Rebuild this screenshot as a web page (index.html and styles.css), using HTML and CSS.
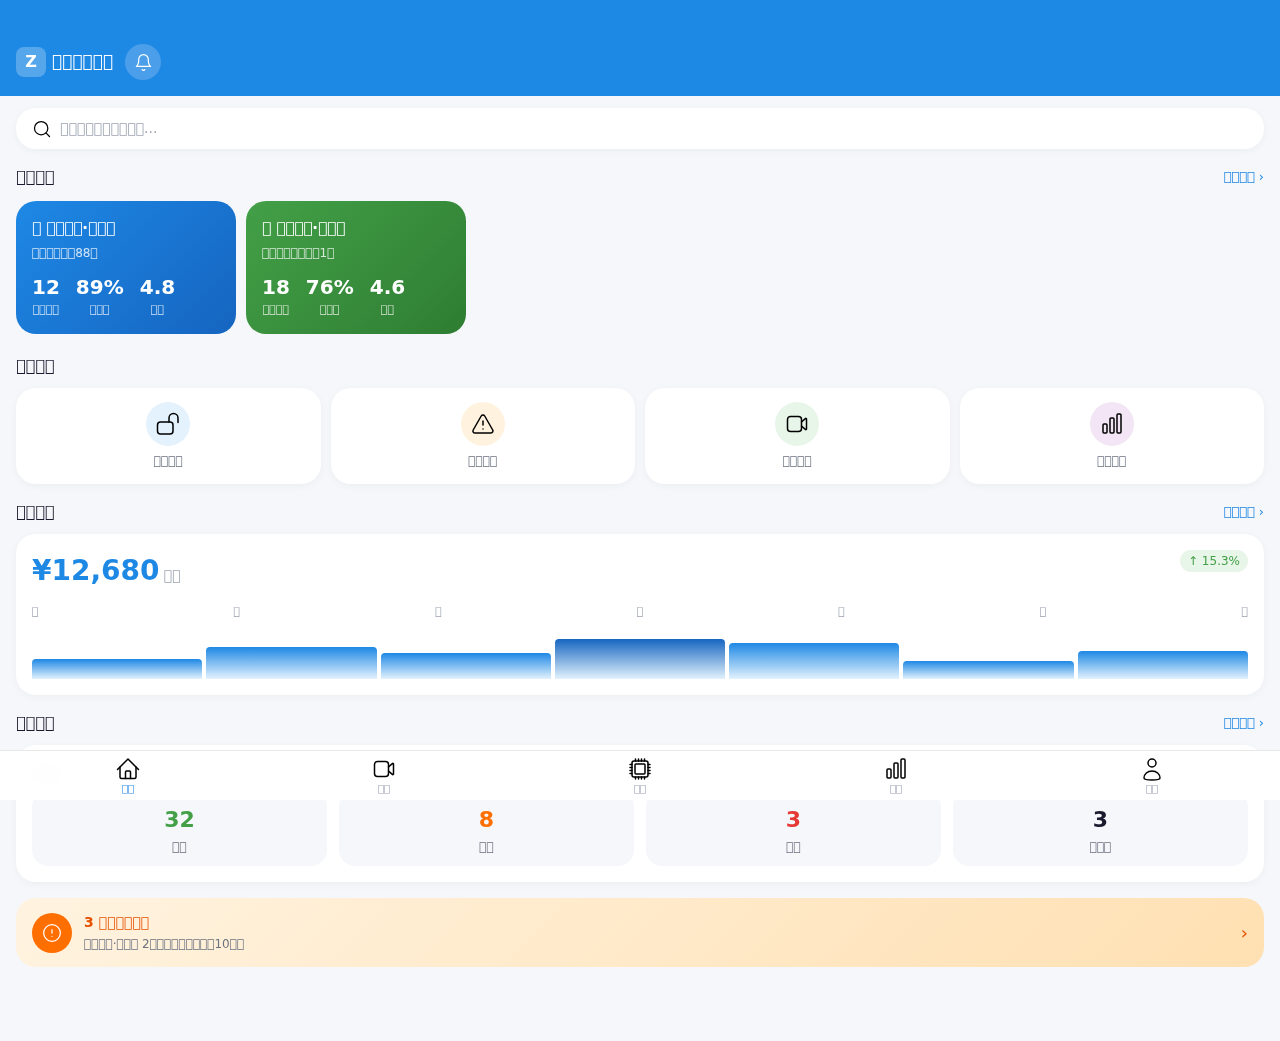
FILE: index.html
```html
<!DOCTYPE html>
<html>
<head>
    <meta charset="utf-8">
    <title>Dashboard</title>
    <link rel="stylesheet" href="styles.css">
</head>
<body>
    <div class="header">
        <div class="logo">Z</div>
        <span class="app-title">&#xE000;&#xE000;&#xE000;&#xE000;&#xE000;&#xE000;</span>
        <div class="bell">
            <svg class="icon-bell" viewBox="0 0 24 24"><path d="M6 8a6 6 0 0 1 12 0c0 7 3 9 3 9H3s3-2 3-9"/><path d="M10.3 21a1.94 1.94 0 0 0 3.4 0"/></svg>
        </div>
    </div>

    <div class="content">
        <div class="search">
            <svg class="icon-search" viewBox="0 0 24 24"><circle cx="11" cy="11" r="8"/><path d="m21 21-4.3-4.3"/></svg>
            <span>&#xE000;&#xE000;&#xE000;&#xE000;&#xE000;&#xE000;&#xE000;&#xE000;&#xE000;&#xE000;...</span>
        </div>

        <div class="section-head">
            <h2>&#xE000;&#xE000;&#xE000;&#xE000;</h2>
            <a class="more">&#xE000;&#xE000;&#xE000;&#xE000; ›</a>
        </div>
        <div class="stores">
            <div class="store store-blue">
                <div class="store-name">&#xE000; &#xE000;&#xE000;&#xE000;&#xE000;·&#xE000;&#xE000;&#xE000;</div>
                <div class="store-sub">&#xE000;&#xE000;&#xE000;&#xE000;&#xE000;&#xE000;88&#xE000;</div>
                <div class="store-stats">
                    <div class="stat"><b>12</b><span>&#xE000;&#xE000;&#xE000;&#xE000;</span></div>
                    <div class="stat"><b>89%</b><span>&#xE000;&#xE000;&#xE000;</span></div>
                    <div class="stat"><b>4.8</b><span>&#xE000;&#xE000;</span></div>
                </div>
            </div>
            <div class="store store-green">
                <div class="store-name">&#xE000; &#xE000;&#xE000;&#xE000;&#xE000;·&#xE000;&#xE000;&#xE000;</div>
                <div class="store-sub">&#xE000;&#xE000;&#xE000;&#xE000;&#xE000;&#xE000;&#xE000;&#xE000;1&#xE000;</div>
                <div class="store-stats">
                    <div class="stat"><b>18</b><span>&#xE000;&#xE000;&#xE000;&#xE000;</span></div>
                    <div class="stat"><b>76%</b><span>&#xE000;&#xE000;&#xE000;</span></div>
                    <div class="stat"><b>4.6</b><span>&#xE000;&#xE000;</span></div>
                </div>
            </div>
        </div>

        <div class="section-head">
            <h2>&#xE000;&#xE000;&#xE000;&#xE000;</h2>
        </div>
        <div class="actions">
            <div class="action">
                <div class="action-icon bg-blue"><svg class="icon" viewBox="0 0 24 24"><rect x="1.5" y="10" width="15.5" height="12" rx="3"/><path d="M13 10V6a4.5 4.5 0 0 1 9 0v4.5"/></svg></div>
                <span>&#xE000;&#xE000;&#xE000;&#xE000;</span>
            </div>
            <div class="action">
                <div class="action-icon bg-orange"><svg class="icon" viewBox="0 0 24 24"><path d="m21.7 18-8-14a2 2 0 0 0-3.5 0l-8 14A2 2 0 0 0 4 21h16a2 2 0 0 0 1.7-3"/><path d="M12 9v4"/><path d="M12 17h.01"/></svg></div>
                <span>&#xE000;&#xE000;&#xE000;&#xE000;</span>
            </div>
            <div class="action">
                <div class="action-icon bg-green"><svg class="icon" viewBox="0 0 24 24"><rect x="2.5" y="4.5" width="14" height="15" rx="3"/><path d="m16.5 10 3.8-3.4a.7.7 0 0 1 1.2.5v9.8a.7.7 0 0 1-1.2.5L16.5 14"/></svg></div>
                <span>&#xE000;&#xE000;&#xE000;&#xE000;</span>
            </div>
            <div class="action">
                <div class="action-icon bg-purple"><svg class="icon" viewBox="0 0 24 24"><rect x="3" y="12" width="4" height="9" rx="1"/><rect x="10" y="6" width="4" height="15" rx="1"/><rect x="17" y="2" width="4" height="19" rx="1"/></svg></div>
                <span>&#xE000;&#xE000;&#xE000;&#xE000;</span>
            </div>
        </div>

        <div class="section-head">
            <h2>&#xE000;&#xE000;&#xE000;&#xE000;</h2>
            <a class="more">&#xE000;&#xE000;&#xE000;&#xE000; ›</a>
        </div>
        <div class="card revenue">
            <div class="revenue-top">
                <div><span class="amount">¥12,680</span><span class="amount-unit">&#xE000;&#xE000;</span></div>
                <span class="trend">↑ 15.3%</span>
            </div>
            <div class="days">
                <span>&#xE000;</span><span>&#xE000;</span><span>&#xE000;</span><span>&#xE000;</span><span>&#xE000;</span><span>&#xE000;</span><span>&#xE000;</span>
            </div>
            <div class="bars">
                <div class="bar" style="height: 20px"></div>
                <div class="bar" style="height: 32px"></div>
                <div class="bar" style="height: 26px"></div>
                <div class="bar bar-peak" style="height: 40px"></div>
                <div class="bar" style="height: 36px"></div>
                <div class="bar" style="height: 18px"></div>
                <div class="bar" style="height: 28px"></div>
            </div>
        </div>

        <div class="section-head">
            <h2>&#xE000;&#xE000;&#xE000;&#xE000;</h2>
            <a class="more">&#xE000;&#xE000;&#xE000;&#xE000; ›</a>
        </div>
        <div class="card devices">
            <div class="devices-title">&#xE000;&#xE000;&#xE000;</div>
            <div class="tiles">
                <div class="tile"><b class="c-green">32</b><span>&#xE000;&#xE000;</span></div>
                <div class="tile"><b class="c-orange">8</b><span>&#xE000;&#xE000;</span></div>
                <div class="tile"><b class="c-red">3</b><span>&#xE000;&#xE000;</span></div>
                <div class="tile"><b class="c-dark">3</b><span>&#xE000;&#xE000;&#xE000;</span></div>
            </div>
        </div>

        <div class="alert">
            <div class="alert-icon"><svg class="icon-sm" viewBox="0 0 24 24"><circle cx="12" cy="12" r="10"/><path d="M12 8v4"/><path d="M12 16h.01"/></svg></div>
            <div class="alert-text">
                <div class="alert-title">3 &#xE000;&#xE000;&#xE000;&#xE000;&#xE000;&#xE000;</div>
                <div class="alert-sub">&#xE000;&#xE000;&#xE000;&#xE000;·&#xE000;&#xE000;&#xE000; 2&#xE000;&#xE000;&#xE000;&#xE000;&#xE000;&#xE000;&#xE000;&#xE000;&#xE000;10&#xE000;&#xE000;</div>
            </div>
            <span class="alert-arrow">›</span>
        </div>
    </div>

    <div class="tabbar">
        <div class="tab tab-active"><svg class="icon" viewBox="0 0 24 24"><path d="M1.5 12.5 12 2l10.5 10.5"/><path d="M4 10v10a1.5 1.5 0 0 0 1.5 1.5h13a1.5 1.5 0 0 0 1.5-1.5V10"/><path d="M9.5 21.5V15a1 1 0 0 1 1-1h3a1 1 0 0 1 1 1v6.5"/></svg><span>&#xE000;&#xE000;</span></div>
        <div class="tab"><svg class="icon" viewBox="0 0 24 24"><rect x="2.5" y="4.5" width="14" height="15" rx="3"/><path d="m16.5 10 3.8-3.4a.7.7 0 0 1 1.2.5v9.8a.7.7 0 0 1-1.2.5L16.5 14"/></svg><span>&#xE000;&#xE000;</span></div>
        <div class="tab"><svg class="icon" viewBox="0 0 24 24"><rect x="4" y="4" width="16" height="16" rx="2"/><rect x="7" y="7" width="10" height="10" rx="1"/><path d="M7.5 2v2M10.5 2v2M13.5 2v2M16.5 2v2M7.5 20v2M10.5 20v2M13.5 20v2M16.5 20v2M2 7.5h2M2 10.5h2M2 13.5h2M2 16.5h2M20 7.5h2M20 10.5h2M20 13.5h2M20 16.5h2"/></svg><span>&#xE000;&#xE000;</span></div>
        <div class="tab"><svg class="icon" viewBox="0 0 24 24"><rect x="3" y="12" width="4" height="9" rx="1"/><rect x="10" y="6" width="4" height="15" rx="1"/><rect x="17" y="2" width="4" height="19" rx="1"/></svg><span>&#xE000;&#xE000;</span></div>
        <div class="tab"><svg class="icon" viewBox="0 0 24 24"><circle cx="12" cy="6" r="4"/><path d="M4 21c0-4 3.5-7 8-7s8 3 8 7c0 1.5-3.5 2-8 2s-8-.5-8-2z"/></svg><span>&#xE000;&#xE000;</span></div>
    </div>
</body>
</html>
```

FILE: styles.css
```css
* {
    box-sizing: border-box;
}

body {
    margin: 0;
    background-color: #f5f7fa;
    color: #1a1a2e;
    font-family: "DejaVu Sans", sans-serif;
    line-height: 1.5;
}

svg {
    fill: none;
    stroke: #000;
    stroke-width: 1.5;
    stroke-linecap: round;
    stroke-linejoin: round;
    display: block;
}

.icon {
    width: 24px;
    height: 24px;
}

.icon-sm {
    width: 20px;
    height: 20px;
    stroke: #fff;
}

.icon-bell {
    width: 19px;
    height: 19px;
    stroke: #fff;
}

.icon-search {
    width: 20px;
    height: 20px;
}

.header {
    display: flex;
    align-items: center;
    height: 96px;
    padding: 44px 16px 16px;
    background-color: #1e88e5;
    color: #fff;
    will-change: transform;
}

.logo {
    width: 30px;
    height: 30px;
    display: flex;
    align-items: center;
    justify-content: center;
    background-color: rgba(255, 255, 255, 0.25);
    border-radius: 8px;
    font-size: 16px;
    font-weight: bold;
}

.app-title {
    margin-left: 6px;
    font-size: 17px;
    font-weight: 600;
}

.bell {
    width: 36px;
    height: 36px;
    margin-left: 12px;
    display: flex;
    align-items: center;
    justify-content: center;
    background-color: rgba(255, 255, 255, 0.2);
    border-radius: 50%;
}

.content {
    padding: 12px 16px 74px;
    will-change: transform;
}

.search {
    display: flex;
    align-items: center;
    gap: 8px;
    height: 41px;
    padding: 0 16px;
    background-color: #fff;
    border-radius: 20px;
    box-shadow: 0 2px 8px rgba(0, 0, 0, 0.04);
    color: #9ca3af;
    font-size: 14px;
}

.section-head {
    display: flex;
    justify-content: space-between;
    align-items: center;
    height: 24px;
    margin: 16px 0 10px;
}

.section-head h2 {
    margin: 0;
    font-size: 16px;
    font-weight: 600;
}

.more {
    color: #1e88e5;
    font-size: 13px;
}

.stores {
    display: flex;
    gap: 10px;
    padding: 2px 0 4px;
}

.store {
    width: 220px;
    height: 133px;
    padding: 16px;
    border-radius: 20px;
    color: #fff;
}

.store-blue {
    background: linear-gradient(135deg, #1e88e5, #1565c0);
}

.store-green {
    background: linear-gradient(135deg, #43a047, #2e7d32);
}

.store-name {
    font-size: 15px;
    font-weight: 600;
}

.store-sub {
    margin-top: 4px;
    font-size: 12px;
    opacity: 0.8;
}

.store-stats {
    display: flex;
    gap: 16px;
    margin-top: 10px;
}

.stat {
    display: flex;
    flex-direction: column;
    align-items: center;
}

.stat b {
    font-size: 20px;
}

.stat span {
    font-size: 11px;
    opacity: 0.8;
}

.actions {
    display: grid;
    grid-template-columns: repeat(4, 1fr);
    gap: 10px;
}

.action {
    display: flex;
    flex-direction: column;
    align-items: center;
    height: 96px;
    padding-top: 14px;
    background-color: #fff;
    border-radius: 20px;
    box-shadow: 0 2px 8px rgba(0, 0, 0, 0.04);
    color: #6b7280;
    font-size: 12px;
}

.action-icon {
    width: 44px;
    height: 44px;
    margin-bottom: 6px;
    display: flex;
    align-items: center;
    justify-content: center;
    border-radius: 50%;
}

.bg-blue { background-color: #e3f2fd; }
.bg-orange { background-color: #fff3e0; }
.bg-green { background-color: #e8f5e9; }
.bg-purple { background-color: #f3e5f5; }

.card {
    padding: 16px;
    background-color: #fff;
    border-radius: 20px;
    box-shadow: 0 2px 8px rgba(0, 0, 0, 0.04);
}

.revenue-top {
    display: flex;
    justify-content: space-between;
    align-items: flex-start;
}

.amount {
    color: #1e88e5;
    font-size: 28px;
    font-weight: bold;
}

.amount-unit {
    margin-left: 4px;
    color: #9ca3af;
    font-size: 14px;
}

.trend {
    padding: 2px 8px;
    background-color: #e8f5e9;
    border-radius: 11px;
    color: #43a047;
    font-size: 12px;
}

.days {
    display: flex;
    justify-content: space-between;
    margin-top: 12px;
    color: #9ca3af;
    font-size: 11px;
    line-height: 15px;
}

.bars {
    display: flex;
    align-items: flex-end;
    gap: 4px;
    height: 60px;
}

.bar {
    flex: 1;
    background: linear-gradient(180deg, #1e88e5, #e3f2fd);
    border-radius: 4px 4px 0 0;
}

.bar-peak {
    background: linear-gradient(180deg, #1565c0, #e3f2fd);
}

.devices-title {
    height: 24px;
    margin-bottom: 6px;
    font-size: 16px;
}

.tiles {
    display: grid;
    grid-template-columns: repeat(4, 1fr);
    gap: 12px;
}

.tile {
    display: flex;
    flex-direction: column;
    align-items: center;
    height: 75px;
    padding-top: 12px;
    background-color: #f5f7fa;
    border-radius: 16px;
    color: #6b7280;
    font-size: 12px;
}

.tile b {
    margin-bottom: 2px;
    font-size: 22px;
}

.c-green { color: #43a047; }
.c-orange { color: #ff6f00; }
.c-red { color: #e53935; }
.c-dark { color: #1a1a2e; }

.alert {
    display: flex;
    align-items: center;
    gap: 12px;
    height: 69px;
    margin-top: 16px;
    padding: 0 16px;
    background: linear-gradient(135deg, #fff3e0, #ffe0b2);
    border-radius: 20px;
}

.alert-icon {
    width: 40px;
    height: 40px;
    display: flex;
    align-items: center;
    justify-content: center;
    background-color: #ff6f00;
    border-radius: 50%;
}

.alert-text {
    flex: 1;
}

.alert-title {
    color: #e65100;
    font-size: 14px;
    font-weight: 600;
}

.alert-sub {
    margin-top: 2px;
    color: #6b7280;
    font-size: 12px;
}

.alert-arrow {
    color: #e65100;
    font-size: 18px;
}

.tabbar {
    position: absolute;
    top: 750px;
    left: 0;
    right: 0;
    height: 50px;
    display: grid;
    grid-template-columns: repeat(5, 1fr);
    background-color: rgba(255, 255, 255, 0.95);
    backdrop-filter: blur(10px);
    border-top: 1px solid #e8e8e8;
    will-change: transform;
}

.tab {
    display: flex;
    flex-direction: column;
    align-items: center;
    padding-top: 6px;
    color: #9ca3af;
    font-size: 10px;
}

.tab-active {
    color: #1e88e5;
}
```
